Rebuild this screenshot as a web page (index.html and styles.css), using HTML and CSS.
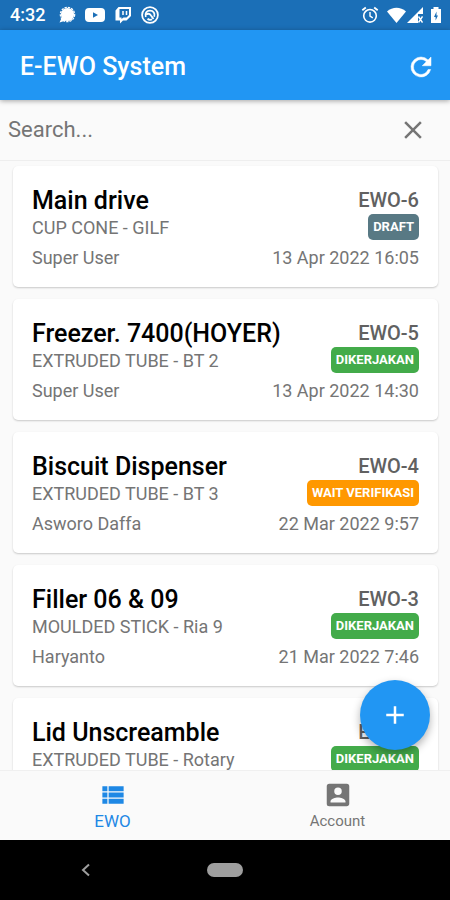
FILE: index.html
```
<!DOCTYPE html>
<html lang="id">

<head>
  <meta charset="UTF-8">
  <meta name="viewport" content="width=device-width, initial-scale=1.0">
  <title>E-EWO System</title>
  <link rel="stylesheet" href="styles.css">
</head>

<body>
  <div class="status-bar">
    <span class="clock">4:32</span>
    <div class="status-icons">
      <svg width="18" height="18" viewBox="0 0 18 18">
        <circle cx="9.500" cy="8.500" r="6.600" fill="#fff" />
        <circle cx="9.500" cy="8.500" r="7.200" fill="none" stroke="#fff" stroke-width="1.200" stroke-dasharray="2.400 1" />
        <path d="M4 11L1.500 16.500L8 14.500Z" fill="#fff" />
      </svg>
      <svg width="20" height="18" viewBox="0 0 20 18">
        <rect x="0" y="2" width="20" height="14" rx="4" fill="#fff" />
        <path d="M8 6.200v5.600l5-2.800z" fill="#1b6fb7" />
      </svg>
      <svg width="18" height="18" viewBox="0 0 18 18">
        <path d="M4.500 1H17v9l-4.500 4.500H9L6 17.500v-3H1.500V4.500z" fill="#fff" />
        <path d="M5.500 3H15v6l-2.500 2.500H9.500L7.500 13v-1.500h-2z" fill="#1b6fb7" />
        <path d="M9 5v4M12.500 5v4" stroke="#fff" stroke-width="1.500" />
      </svg>
      <svg width="18" height="18" viewBox="0 0 18 18" fill="none" stroke="#fff">
        <circle cx="9" cy="9" r="7.900" stroke-width="1.800" />
        <path d="M4.800 11C3.600 7.500 5.500 4.600 9 4.600s5.300 3 4.200 6.200" stroke-width="1.800" />
        <path d="M5 8.500c2.500-1.500 4-.5 5 1l2.500 3.500M6.500 12.800c1.200 1 3 1.200 4.500.6" stroke-width="1.800" />
      </svg>
    </div>
    <div class="system-icons">
      <svg width="18" height="18" viewBox="0 0 18 18" fill="none" stroke="#fff">
        <circle cx="9" cy="9.800" r="6.300" stroke-width="1.600" />
        <path d="M9 6v4l2.800 1.800" stroke-width="1.400" />
        <path d="M1.300 4.300L4.800 1.500M16.700 4.300L13.200 1.500" stroke-width="1.800" />
      </svg>
      <svg width="36" height="18" viewBox="0 0 36 18">
        <path d="M0 5.500C5.500.500 13.500.500 19 5.500L9.500 17z" fill="#fff" />
        <path d="M36 1v7h-5v9H20z" fill="#fff" />
        <path d="M31.500 10.500l4 6M35.500 10.500l-4 6" stroke="#fff" stroke-width="1.400" />
      </svg>
      <svg width="10" height="18" viewBox="0 0 10 18">
        <path d="M2.500 1h5v2H10v14H0V3h2.500z" fill="#fff" />
        <path d="M5.500 5.500L3 11h1.600v3.500L7 9.500H5.500z" fill="#1b6fb7" />
      </svg>
    </div>
  </div>

  <header class="app-bar">
    <h1>E-EWO System</h1>
    <button type="button" aria-label="Refresh">
      <svg width="30" height="30" viewBox="0 0 24 24" fill="currentColor">
        <path d="M17.650 6.350A7.960 7.960 0 0 0 12 4a8 8 0 1 0 7.730 10h-2.080A6 6 0 1 1 12 6c1.660 0 3.140.690 4.220 1.780L13 11h7V4z" stroke="currentColor" stroke-width=".4" />
      </svg>
    </button>
  </header>

  <form class="search-bar">
    <input type="text" name="search" placeholder="Search..." aria-label="Search">
    <button type="reset" aria-label="Clear">
      <svg width="30" height="30" viewBox="0 0 24 24" fill="currentColor">
        <path d="M19 6.410L17.590 5 12 10.590 6.410 5 5 6.410 10.590 12 5 17.590 6.410 19 12 13.410 17.590 19 19 17.590 13.410 12z" />
      </svg>
    </button>
  </form>

  <main class="content">
    <div class="list">
      <article class="card">
        <div class="card-top">
          <div class="machine">
            <h2>Main drive</h2>
            <p>CUP CONE - GILF</p>
          </div>
          <div class="state">
            <span class="number">EWO-6</span>
            <span class="badge draft">DRAFT</span>
          </div>
        </div>
        <div class="card-bottom">
          <span>Super User</span>
          <time>13 Apr 2022 16:05</time>
        </div>
      </article>

      <article class="card">
        <div class="card-top">
          <div class="machine">
            <h2>Freezer. 7400(HOYER)</h2>
            <p>EXTRUDED TUBE - BT 2</p>
          </div>
          <div class="state">
            <span class="number">EWO-5</span>
            <span class="badge progress">DIKERJAKAN</span>
          </div>
        </div>
        <div class="card-bottom">
          <span>Super User</span>
          <time>13 Apr 2022 14:30</time>
        </div>
      </article>

      <article class="card">
        <div class="card-top">
          <div class="machine">
            <h2>Biscuit Dispenser</h2>
            <p>EXTRUDED TUBE - BT 3</p>
          </div>
          <div class="state">
            <span class="number">EWO-4</span>
            <span class="badge waiting">WAIT VERIFIKASI</span>
          </div>
        </div>
        <div class="card-bottom">
          <span>Asworo Daffa</span>
          <time>22 Mar 2022 9:57</time>
        </div>
      </article>

      <article class="card">
        <div class="card-top">
          <div class="machine">
            <h2>Filler 06 &amp; 09</h2>
            <p>MOULDED STICK - Ria 9</p>
          </div>
          <div class="state">
            <span class="number">EWO-3</span>
            <span class="badge progress">DIKERJAKAN</span>
          </div>
        </div>
        <div class="card-bottom">
          <span>Haryanto</span>
          <time>21 Mar 2022 7:46</time>
        </div>
      </article>

      <article class="card">
        <div class="card-top">
          <div class="machine">
            <h2>Lid Unscreamble</h2>
            <p>EXTRUDED TUBE - Rotary</p>
          </div>
          <div class="state">
            <span class="number">EWO-2</span>
            <span class="badge progress">DIKERJAKAN</span>
          </div>
        </div>
      </article>
    </div>

    <button type="button" class="fab" aria-label="Add">
      <svg width="30" height="30" viewBox="0 0 24 24" fill="currentColor">
        <path d="M19 13h-6v6h-2v-6H5v-2h6V5h2v6h6z" />
      </svg>
    </button>
  </main>

  <nav class="bottom-nav">
    <a href="#" class="active">
      <svg width="30" height="30" viewBox="0 0 24 24" fill="currentColor">
        <path d="M3.500 5h4v4h-4zM8.500 5h12v4h-12zM3.500 10h4v4h-4zM8.500 10h12v4h-12zM3.500 15h4v4h-4zM8.500 15h12v4h-12z" />
      </svg>
      EWO
    </a>
    <a href="#">
      <svg width="30" height="30" viewBox="0 0 24 24" fill="currentColor">
        <path d="M3 5v14a2 2 0 0 0 2 2h14c1.100 0 2-.900 2-2V5a2 2 0 0 0-2-2H5a2 2 0 0 0-2 2zm12 4a3 3 0 1 1-6 0 3 3 0 0 1 6 0zm-9 8c0-2 4-3.100 6-3.100s6 1.100 6 3.100v1H6z" />
      </svg>
      Account
    </a>
  </nav>

  <div class="system-nav">
    <button type="button" class="back" aria-label="Back">
      <svg width="12" height="16" viewBox="0 0 12 16" fill="none" stroke="currentColor" stroke-width="2">
        <path d="M9 2.500L3 8l6 5.500" />
      </svg>
    </button>
    <button type="button" class="home" aria-label="Home"></button>
  </div>
</body>

</html>
```

FILE: styles.css
```
* {
  box-sizing: border-box;
}

body {
  margin: 0;
  height: 100vh;
  display: flex;
  flex-direction: column;
  overflow: hidden;
  background: #fafafa;
  color: #757575;
  font-family: Roboto, sans-serif;
}

h1,
h2,
p {
  margin: 0;
}

svg {
  display: block;
}

button {
  border: none;
  padding: 0;
  background: none;
  color: inherit;
  cursor: pointer;
}

/* Status bar */
.status-bar {
  flex: none;
  display: flex;
  align-items: center;
  height: 30px;
  padding: 0 9px 0 10px;
  background: #1b6fb7;
  color: #fff;
}

.clock {
  font-size: 18px;
  font-weight: 500;
  line-height: 30px;
}

.status-icons {
  display: flex;
  gap: 9px;
  margin-left: 13px;
}

.system-icons {
  display: flex;
  gap: 8px;
  margin-left: auto;
}

/* App bar */
.app-bar {
  flex: none;
  position: relative;
  z-index: 1;
  display: flex;
  align-items: center;
  justify-content: space-between;
  height: 70px;
  padding: 3px 14px 0 20px;
  background: #2196f3;
  color: #fff;
  box-shadow: 0 1px 5px rgba(0, 0, 0, 0.35);
}

.app-bar h1 {
  font-size: 25px;
  font-weight: 500;
  line-height: 32px;
}

/* Search */
.search-bar {
  flex: none;
  display: flex;
  align-items: center;
  height: 61px;
  padding: 0 22px 0 8px;
  border-bottom: 1px solid #eee;
}

.search-bar input {
  flex: 1;
  min-width: 0;
  padding: 0 0 2px;
  border: none;
  outline: none;
  background: none;
  color: #212121;
  font-family: inherit;
  font-size: 22px;
}

.search-bar input::placeholder {
  color: #757575;
}

/* List */
.content {
  position: relative;
  flex: 1;
  min-height: 0;
}

.list {
  display: flex;
  flex-direction: column;
  gap: 12px;
  height: 100%;
  padding: 5px 12px 0 13px;
  overflow: hidden;
}

.card {
  flex: none;
  padding: 20px 19px 17px;
  border-radius: 5px;
  background: #fff;
  box-shadow: 0 1px 2px rgba(0, 0, 0, 0.2);
  font-size: 18px;
  line-height: 24px;
}

.card-top,
.card-bottom {
  display: flex;
  justify-content: space-between;
}

.card-bottom {
  margin-top: 6px;
}

.machine h2 {
  color: #000;
  font-size: 25px;
  font-weight: 500;
  line-height: 30px;
}

.state {
  display: flex;
  flex-direction: column;
  align-items: flex-end;
}

.number {
  color: #616161;
  font-size: 20px;
  font-weight: 500;
  line-height: 28px;
}

.badge {
  padding: 0 5px;
  border-radius: 5px;
  color: #fff;
  font-size: 13px;
  font-weight: 700;
  line-height: 26px;
}

.draft {
  background: #587984;
}

.progress {
  background: #43ab4a;
}

.waiting {
  background: #ff9800;
}

.fab {
  position: absolute;
  right: 20px;
  bottom: 20px;
  display: flex;
  align-items: center;
  justify-content: center;
  width: 70px;
  height: 70px;
  border-radius: 50%;
  background: #2196f3;
  color: #fff;
  box-shadow: 0 4px 8px rgba(0, 0, 0, 0.3);
}

/* Bottom navigation */
.bottom-nav {
  flex: none;
  display: flex;
  height: 70px;
  border-top: 1px solid #f0f0f0;
  background: #fafafa;
}

.bottom-nav a {
  flex: 1;
  display: flex;
  flex-direction: column;
  align-items: center;
  padding-top: 9px;
  color: #757575;
  font-size: 15px;
  line-height: 22px;
  text-decoration: none;
}

.bottom-nav .active {
  color: #1e88e5;
  font-size: 17px;
}

.system-nav {
  flex: none;
  display: grid;
  grid-template-columns: 1fr 36px 1fr;
  align-items: center;
  height: 60px;
  background: #000;
  color: #9e9e9e;
}

.back {
  justify-self: center;
  margin-right: 36px;
}

.home {
  height: 14px;
  border-radius: 7px;
  background: #9e9e9e;
}
```
